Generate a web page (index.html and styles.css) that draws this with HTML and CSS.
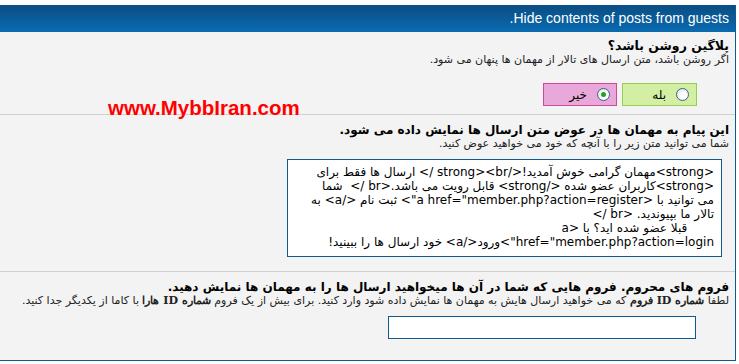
FILE: index.html
```html
<!DOCTYPE html>
<html lang="fa" dir="rtl">
<head>
  <meta charset="UTF-8">
  <meta name="viewport" content="width=device-width, initial-scale=1.0">
  <title>Hide contents of posts from guests</title>
  <link rel="stylesheet" href="styles.css">
</head>
<body>
  <div class="tborder">
    <div class="thead">Hide contents of posts from guests.</div>

    <div class="trow row-on">
      <div class="label">پلاگین روشن باشد؟</div>
      <div class="desc">اگر روشن باشد، متن ارسال های تالار از مهمان ها پنهان می شود.</div>
      <div class="yesno">
        <label class="yes"><span class="radio"></span> بله</label>
        <label class="no"><span class="radio checked"></span> خیر</label>
      </div>
    </div>

    <div class="trow row-msg">
      <div class="label">این پیام به مهمان ها در عوض متن ارسال ها نمایش داده می شود.</div>
      <div class="desc">شما می توانید متن زیر را با آنچه که خود می خواهید عوض کنید.</div>
      <textarea class="msg" spellcheck="false"><strong>مهمان گرامی خوش آمدید!</strong><br /> ارسال ها فقط برای <strong>کاربران عضو شده </strong> قابل رویت می باشد.<br />  شما می توانید با <a href="member.php?&#8288;action=register"> ثبت نام </a> به تالار ما بپیوندید. <br />
       قبلا عضو شده اید؟ با <a href="member.php?&#8288;action=login">ورود</a> خود ارسال ها را ببینید!</textarea>
    </div>

    <div class="trow row-forums">
      <div class="label">فروم های محروم. فروم هایی که شما در آن ها میخواهید ارسال ها را به مهمان ها نمایش دهید.</div>
      <div class="desc">لطفا <b>شماره ID فروم</b> که می خواهید ارسال هایش به مهمان ها نمایش داده شود وارد کنید. برای بیش از یک فروم <b>شماره ID هارا</b> با کاما از یکدیگر جدا کنید.</div>
      <input class="forums" type="text">
    </div>
  </div>

  <div class="watermark" dir="ltr">www.MybbIran.com</div>
</body>
</html>
```

FILE: styles.css
```css
body {
  margin: 0;
  padding-top: 5px;
  background: #fff;
  font-family: "DejaVu Sans", sans-serif;
  color: #000;
}

.tborder {
  width: 736px;
  margin: 0 3px 0 0;
  box-sizing: border-box;
  border-right: 1px solid #0f5a8e;
  border-bottom: 1px solid #0f5a8e;
  background: #f3f3f3;
}

.thead {
  height: 27px;
  line-height: 27px;
  padding: 0 6px;
  background: linear-gradient(to bottom, #0a4d82, #0a6bb1);
  color: #fff;
  font-family: "Liberation Sans", sans-serif;
  font-size: 14px;
}

.trow {
  padding: 7px 6px 0 6px;
  border-bottom: 1px solid #d0d0d0;
}

.trow:last-child {
  border-bottom: none;
}

.label {
  font-size: 12px;
  font-weight: bold;
  line-height: 14px;
}

.row-on .label {
  font-size: 12.5px;
}

.desc {
  font-size: 11px;
  line-height: 14px;
  color: #222;
}

.desc b {
  font-family: "DejaVu Serif", serif;
}

.row-on {
  padding-bottom: 8px;
}

.yesno {
  display: flex;
  gap: 5px;
  margin: 16px 32px 0 0;
}

.yesno label {
  display: flex;
  align-items: center;
  gap: 10px;
  height: 23px;
  box-sizing: border-box;
  font-size: 12px;
}

.yes {
  width: 75px;
  padding-right: 7px;
  background: #d3efa3;
  border: 1px solid #99cc55;
}

.no {
  width: 74px;
  padding-right: 6px;
  background: #e8a9da;
  border: 1px solid #cc4a9c;
}

.radio {
  width: 13px;
  height: 13px;
  box-sizing: border-box;
  border-radius: 50%;
  border: 1px solid #3a6394;
  background: radial-gradient(circle at 60% 60%, #fff 30%, #d8d8d0 100%);
  position: relative;
}

.radio.checked::after {
  content: "";
  position: absolute;
  left: 3px;
  top: 3px;
  width: 5px;
  height: 5px;
  border-radius: 50%;
  background: #21a121;
}

.row-msg {
  padding-top: 8px;
  padding-bottom: 14px;
}

.msg {
  display: block;
  width: 435px;
  height: 98px;
  margin: 8px 7px 0 0;
  box-sizing: border-box;
  padding: 5px 7px 5px 18px;
  border: 1px solid #0f5a8e;
  background: #fff;
  font-family: "DejaVu Sans", sans-serif;
  font-size: 12px;
  line-height: 14px;
  resize: none;
  overflow: hidden;
  color: #000;
}

.row-forums {
  padding-top: 8px;
  padding-bottom: 21px;
}

.forums {
  display: block;
  width: 308px;
  height: 23px;
  margin: 8px 33px 0 0;
  box-sizing: border-box;
  border: 1px solid #0f5a8e;
  background: #fff;
}

.watermark {
  position: absolute;
  left: 108px;
  top: 96px;
  color: #ff0000;
  font-family: "Liberation Sans", Arial, sans-serif;
  font-weight: bold;
  font-size: 20.5px;
  line-height: 24px;
}
```
